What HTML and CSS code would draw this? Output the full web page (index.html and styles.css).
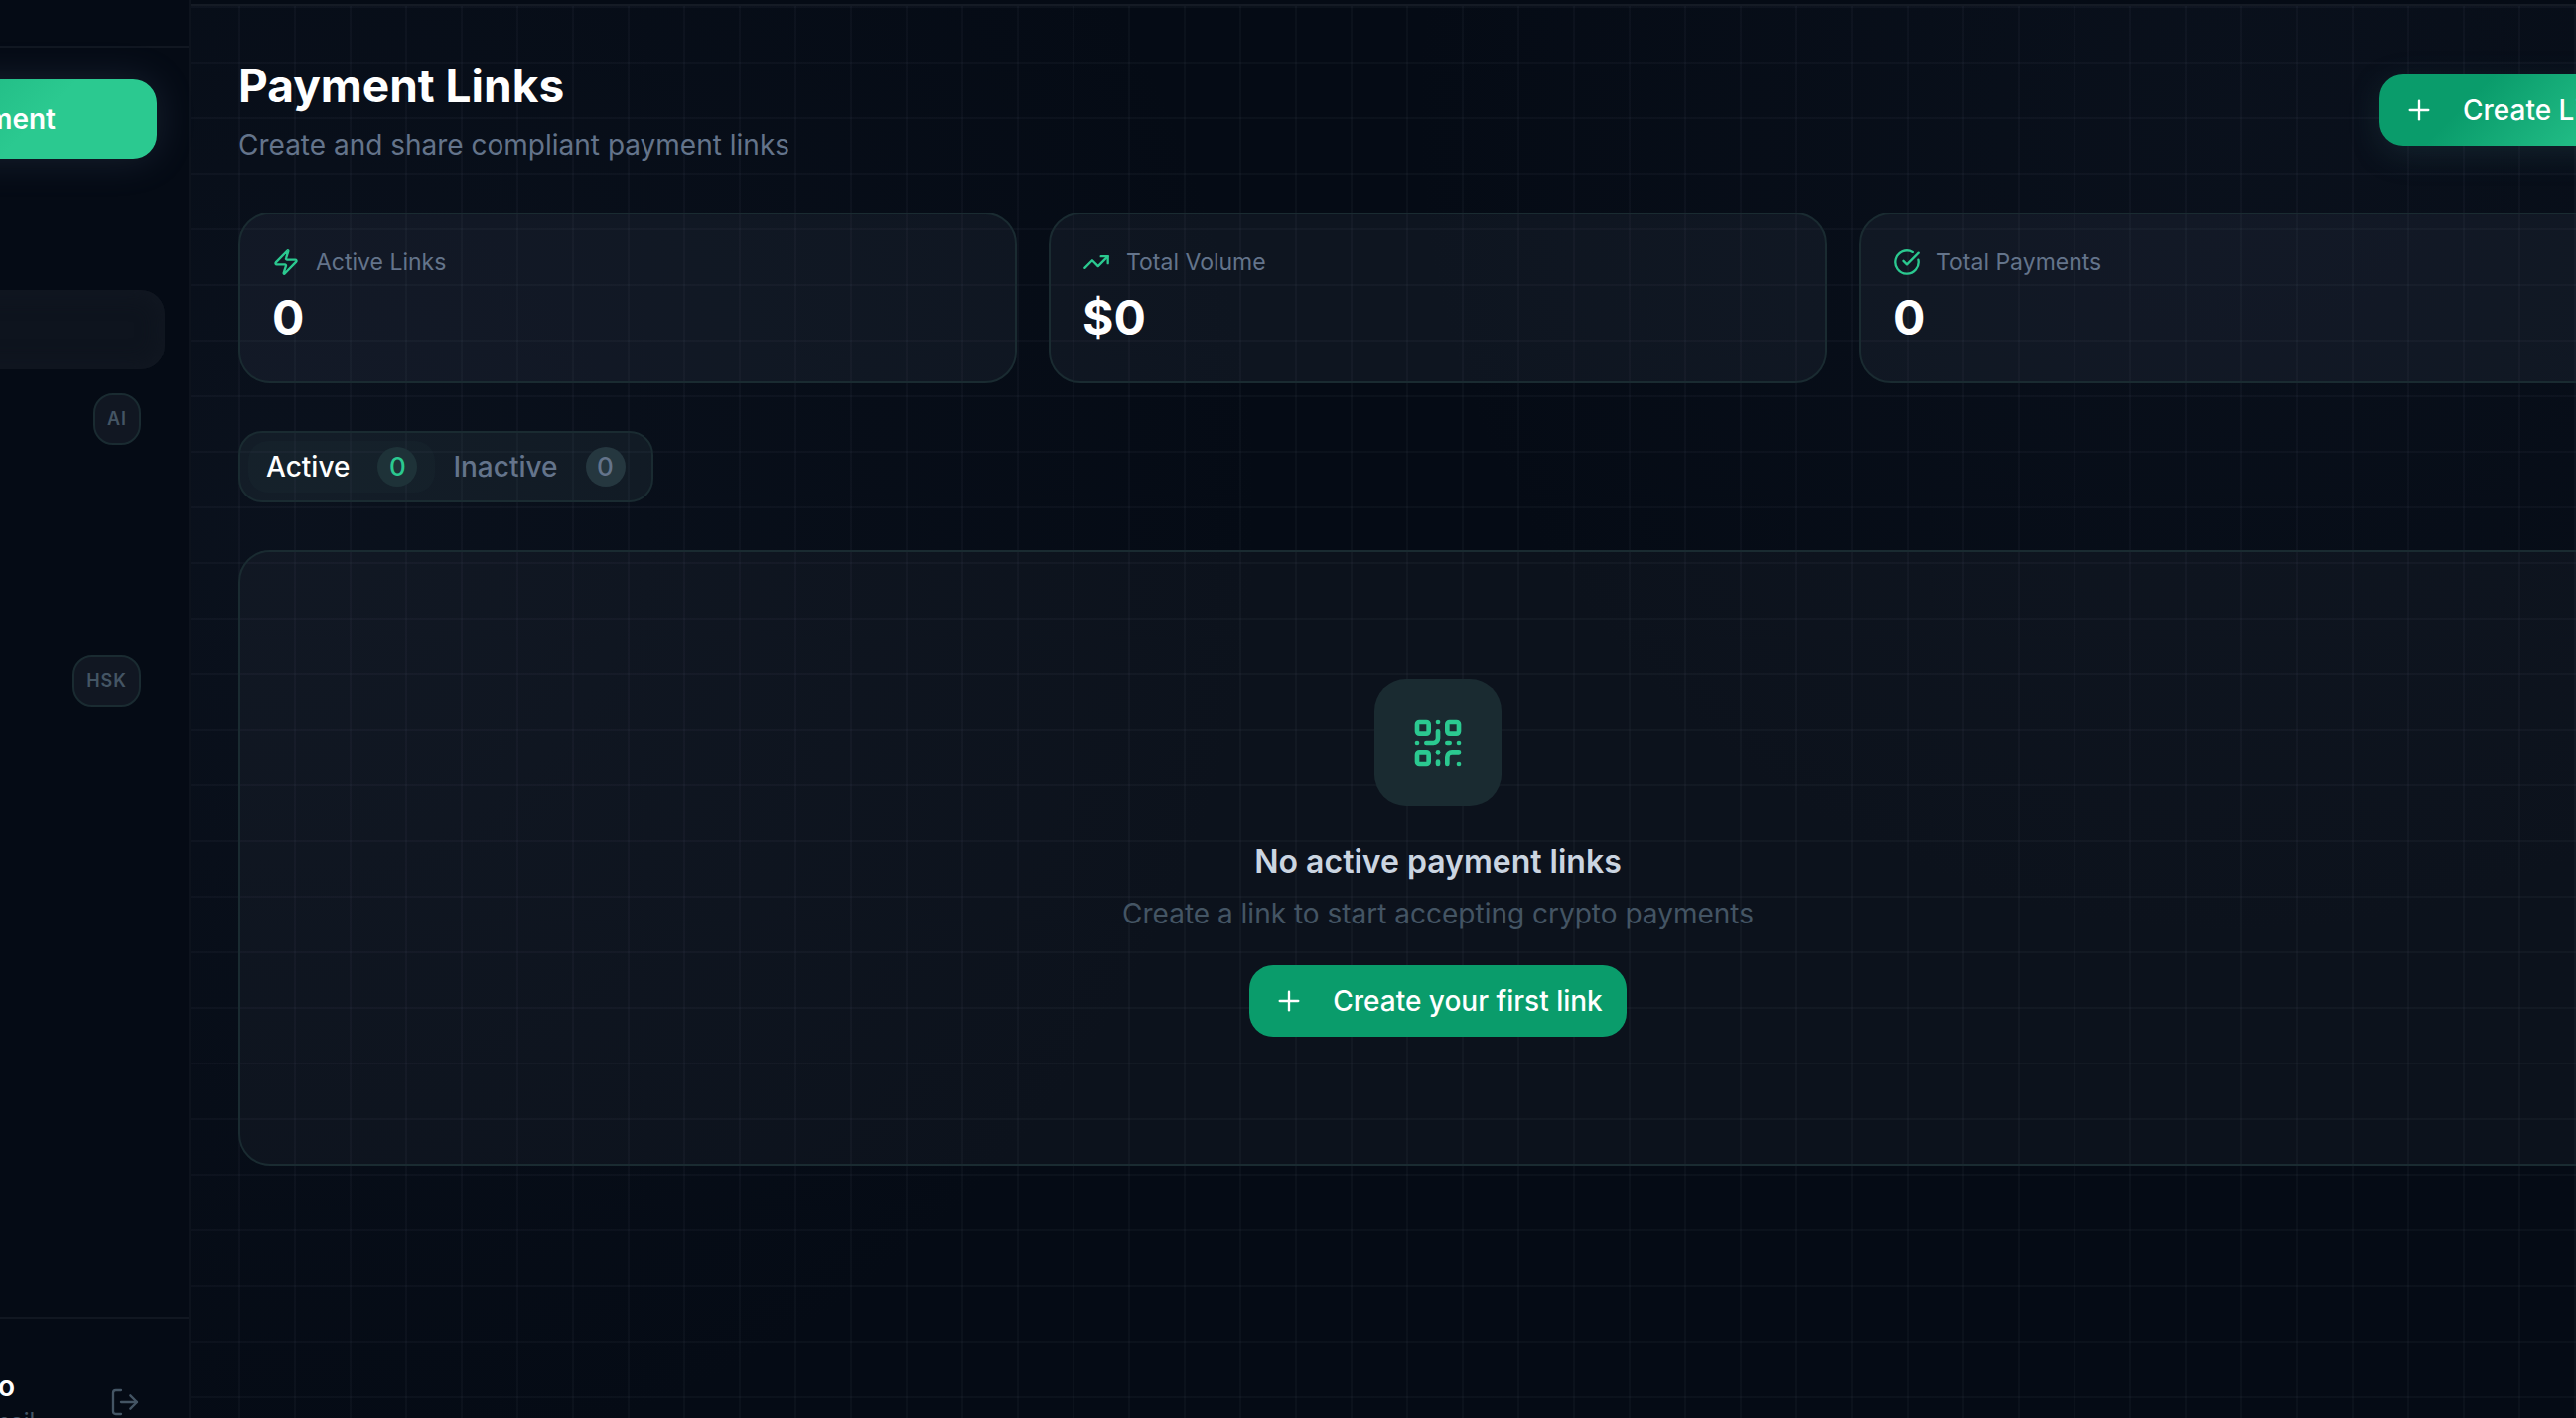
FILE: index.html
```html
<!DOCTYPE html>
<html lang="en">
<head>
<meta charset="utf-8">
<title>Payment Links</title>
<link rel="stylesheet" href="styles.css">
</head>
<body>
<div class="shell">
  <aside class="sidebar">
    <div class="brand"></div>
    <div class="sidebar-action">
      <button class="cta" type="button">Create Payment</button>
    </div>
    <nav class="nav" aria-label="Main">
      <div class="nav-group">
        <a class="nav-item nav-item-active" href="#links" aria-label="Payment Links"></a>
      </div>
      <div class="nav-group">
        <a class="nav-item" href="#assistant"><span class="tag">AI</span></a>
        <a class="nav-item" href="#activity" aria-label="Activity"></a>
        <a class="nav-item" href="#wallet" aria-label="Wallet"></a>
        <a class="nav-item" href="#hsk"><span class="tag">HSK</span></a>
      </div>
    </nav>
    <div class="account">
      <div class="account-text">
        <span class="account-name">Demo</span>
        <span class="account-mail">No email</span>
      </div>
      <button class="logout" type="button" aria-label="Log out">
        <svg class="icon-lg" viewBox="0 0 24 24"><path d="M9 21H5a2 2 0 0 1-2-2V5a2 2 0 0 1 2-2h4"/><path d="m16 17 5-5-5-5"/><path d="M21 12H9"/></svg>
      </button>
    </div>
  </aside>

  <div class="main">
    <div class="topbar"></div>
    <main class="content">
      <header class="page-head">
        <div>
          <h1 class="title">Payment Links</h1>
          <p class="subtitle">Create and share compliant payment links</p>
        </div>
        <button class="btn btn-glow" type="button">
          <svg class="icon-lg" viewBox="0 0 24 24"><path d="M5 12h14"/><path d="M12 5v14"/></svg>
          Create Link
        </button>
      </header>

      <section class="stats" aria-label="Summary">
        <article class="card stat">
          <h2 class="stat-label">
            <svg class="icon-md" viewBox="0 0 24 24"><path d="M4 14a1 1 0 0 1-.78-1.63l9.9-10.2a.5.5 0 0 1 .86.46l-1.92 6.02A1 1 0 0 0 13 10h7a1 1 0 0 1 .78 1.63l-9.9 10.2a.5.5 0 0 1-.86-.46l1.92-6.02A1 1 0 0 0 11 14z"/></svg>
            Active Links
          </h2>
          <p class="stat-value">0</p>
        </article>
        <article class="card stat">
          <h2 class="stat-label">
            <svg class="icon-md" viewBox="0 0 24 24"><path d="M22 7 13.5 15.5 8.500 10.500 2 17"/><path d="M16 7h6v6"/></svg>
            Total Volume
          </h2>
          <p class="stat-value">$0</p>
        </article>
        <article class="card stat">
          <h2 class="stat-label">
            <svg class="icon-md" viewBox="0 0 24 24"><path d="M21.801 10A10 10 0 1 1 17 3.335"/><path d="m9 11 3 3L22 4"/></svg>
            Total Payments
          </h2>
          <p class="stat-value">0</p>
        </article>
      </section>

      <div class="tabs" role="tablist">
        <button class="tab tab-active" type="button" role="tab" aria-selected="true">Active <span class="count">0</span></button>
        <button class="tab" type="button" role="tab" aria-selected="false">Inactive <span class="count">0</span></button>
      </div>

      <section class="card empty">
        <div class="empty-icon">
          <svg class="icon-xl" viewBox="0 0 24 24"><rect width="5" height="5" x="3" y="3" rx="1"/><rect width="5" height="5" x="16" y="3" rx="1"/><rect width="5" height="5" x="3" y="16" rx="1"/><path d="M21 16h-3a2 2 0 0 0-2 2v3"/><path d="M21 21v.01"/><path d="M12 7v3a2 2 0 0 1-2 2H7"/><path d="M3 12h.01"/><path d="M12 3h.01"/><path d="M12 16v.01"/><path d="M16 12h1"/><path d="M21 12v.01"/><path d="M12 21v-1"/></svg>
        </div>
        <h2 class="empty-title">No active payment links</h2>
        <p class="empty-text">Create a link to start accepting crypto payments</p>
        <button class="btn" type="button">
          <svg class="icon-lg" viewBox="0 0 24 24"><path d="M5 12h14"/><path d="M12 5v14"/></svg>
          Create your first link
        </button>
      </section>
    </main>
  </div>
</div>
</body>
</html>
```
FILE: styles.css
```css
:root {
  --bg: #050b15;
  --line: #111721;
  --card: #111722;
  --edge: #1a2b31;
  --green: #2bc990;
  --green-deep: #0a9c6b;
  --muted: #64748b;
  --dim: #445564;
}

* { box-sizing: border-box; margin: 0; }

body {
  background: var(--bg);
  color: #fff;
  font-family: "Inter", "Liberation Sans", sans-serif;
  font-size: 28px;
  line-height: 40px;
  overflow: hidden;
}

button { border: 0; background: none; color: inherit; font: inherit; }

svg {
  flex: none;
  fill: none;
  stroke: currentColor;
  stroke-width: 1.75;
  stroke-linecap: round;
  stroke-linejoin: round;
}
.icon-md { width: 28px; height: 28px; color: var(--green); stroke-width: 2; }
.icon-lg { width: 32px; height: 32px; }
.icon-xl { width: 56px; height: 56px; stroke-width: 2; }

.shell { display: flex; height: 100vh; }

/* Sidebar: slides partly out past the left edge */
.sidebar {
  flex: none;
  display: flex;
  flex-direction: column;
  width: 512px;
  margin-left: -320px;
  border-right: 2px solid #0d131d;
}
.brand { height: 48px; border-bottom: 2px solid var(--line); }
.sidebar-action { padding: 32px; }
.cta {
  display: block;
  width: 100%;
  height: 80px;
  padding-right: 102px;
  border-radius: 24px;
  background: linear-gradient(135deg, var(--green-deep), var(--green) 70%);
  box-shadow: 0 0 40px rgba(130, 150, 190, 0.16);
  font-weight: 600;
  text-align: right;
}
.nav {
  flex: 1;
  display: flex;
  flex-direction: column;
  gap: 10px;
  padding: 100px 24px 0;
}
.nav-group { display: grid; grid-auto-rows: 80px; gap: 8px; }
.nav-item {
  display: flex;
  align-items: center;
  justify-content: flex-end;
  padding: 0 24px;
  border-radius: 24px;
  text-decoration: none;
}
.nav-item-active { background: #0e141e; box-shadow: inset 0 0 24px 2px #121822; }
.tag {
  padding: 8px 12px;
  border: 2px solid var(--edge);
  border-radius: 20px;
  background: var(--card);
  color: var(--dim);
  font-size: 18px;
  font-weight: 600;
  line-height: 32px;
  letter-spacing: 1px;
}
.account {
  flex: none;
  display: flex;
  justify-content: space-between;
  align-items: center;
  height: 102px;
  padding: 68px 48px 0 256px;
  border-top: 2px solid var(--line);
}
.account-text { display: flex; flex-direction: column; padding-top: 4px; }
.account-name { font-weight: 600; line-height: 36px; }
.account-mail { color: var(--dim); font-size: 24px; line-height: 36px; }
.logout { display: flex; padding: 0; color: var(--dim); }

/* Main column: runs on past the right edge */
.main {
  flex: 1;
  min-width: 0;
  margin-right: -110px;
  background:
    linear-gradient(90deg, rgba(148, 163, 184, 0.045) 2px, transparent 2px) 48px 0 / 56px 56px,
    linear-gradient(rgba(148, 163, 184, 0.045) 2px, transparent 2px) 0 6px / 56px 56px,
    radial-gradient(circle at 4% 36%, rgba(32, 42, 60, 0.2), transparent 38%),
    radial-gradient(circle at 82% 8%, rgba(32, 42, 60, 0.18), transparent 34%);
}
.topbar { height: 6px; background: var(--bg); border-bottom: 2px solid #151b25; }
.content {
  display: flex;
  flex-direction: column;
  gap: 48px;
  padding: 50px 48px 48px;
}

.page-head { display: flex; justify-content: space-between; align-items: center; }
.title { font-size: 46px; font-weight: 700; line-height: 60px; }
.subtitle { margin-top: 10px; color: var(--muted); }

.btn {
  display: flex;
  align-items: center;
  gap: 28px;
  height: 72px;
  padding: 0 24px;
  border-radius: 24px;
  background: var(--green-deep);
  font-weight: 500;
  white-space: nowrap;
}
.btn-glow {
  background: linear-gradient(135deg, var(--green-deep) 35%, var(--green));
  box-shadow: 0 8px 32px rgba(60, 110, 120, 0.22);
}

.card { border: 2px solid var(--edge); border-radius: 32px; }

.stats { display: grid; grid-template-columns: repeat(3, 1fr); gap: 32px; }
.stat { padding: 32px; background: rgba(148, 158, 178, 0.07); }
.stat-label {
  display: flex;
  align-items: center;
  gap: 16px;
  color: var(--muted);
  font-size: 23px;
  font-weight: 400;
  line-height: 32px;
}
.stat-value { margin-top: 8px; font-size: 48px; font-weight: 700; line-height: 64px; }

.tabs {
  display: flex;
  align-self: flex-start;
  height: 72px;
  padding: 8px;
  border: 2px solid var(--edge);
  border-radius: 24px;
  background: rgba(110, 160, 160, 0.09);
}
.tab {
  display: flex;
  align-items: center;
  gap: 28px;
  padding: 0 18px;
  border-radius: 20px;
  color: var(--muted);
  font-weight: 500;
}
.tab-active { background: rgba(110, 160, 160, 0.03); color: #fff; }
.count {
  width: 40px;
  border-radius: 50%;
  background: #25373f;
  color: var(--muted);
  font-size: 26px;
  text-align: center;
}
.tab-active .count { background: #1e3238; color: var(--green); }

.empty {
  display: flex;
  flex-direction: column;
  align-items: center;
  padding: 128px 32px;
  background: rgba(148, 158, 178, 0.05);
}
.empty-icon {
  display: flex;
  align-items: center;
  justify-content: center;
  width: 128px;
  height: 128px;
  border-radius: 32px;
  background: #1a2b31;
  color: var(--green);
}
.empty-title {
  margin-top: 32px;
  color: #cbd5e1;
  font-size: 32px;
  font-weight: 600;
  line-height: 48px;
}
.empty-text { margin: 8px 0 32px; color: var(--dim); }
```
